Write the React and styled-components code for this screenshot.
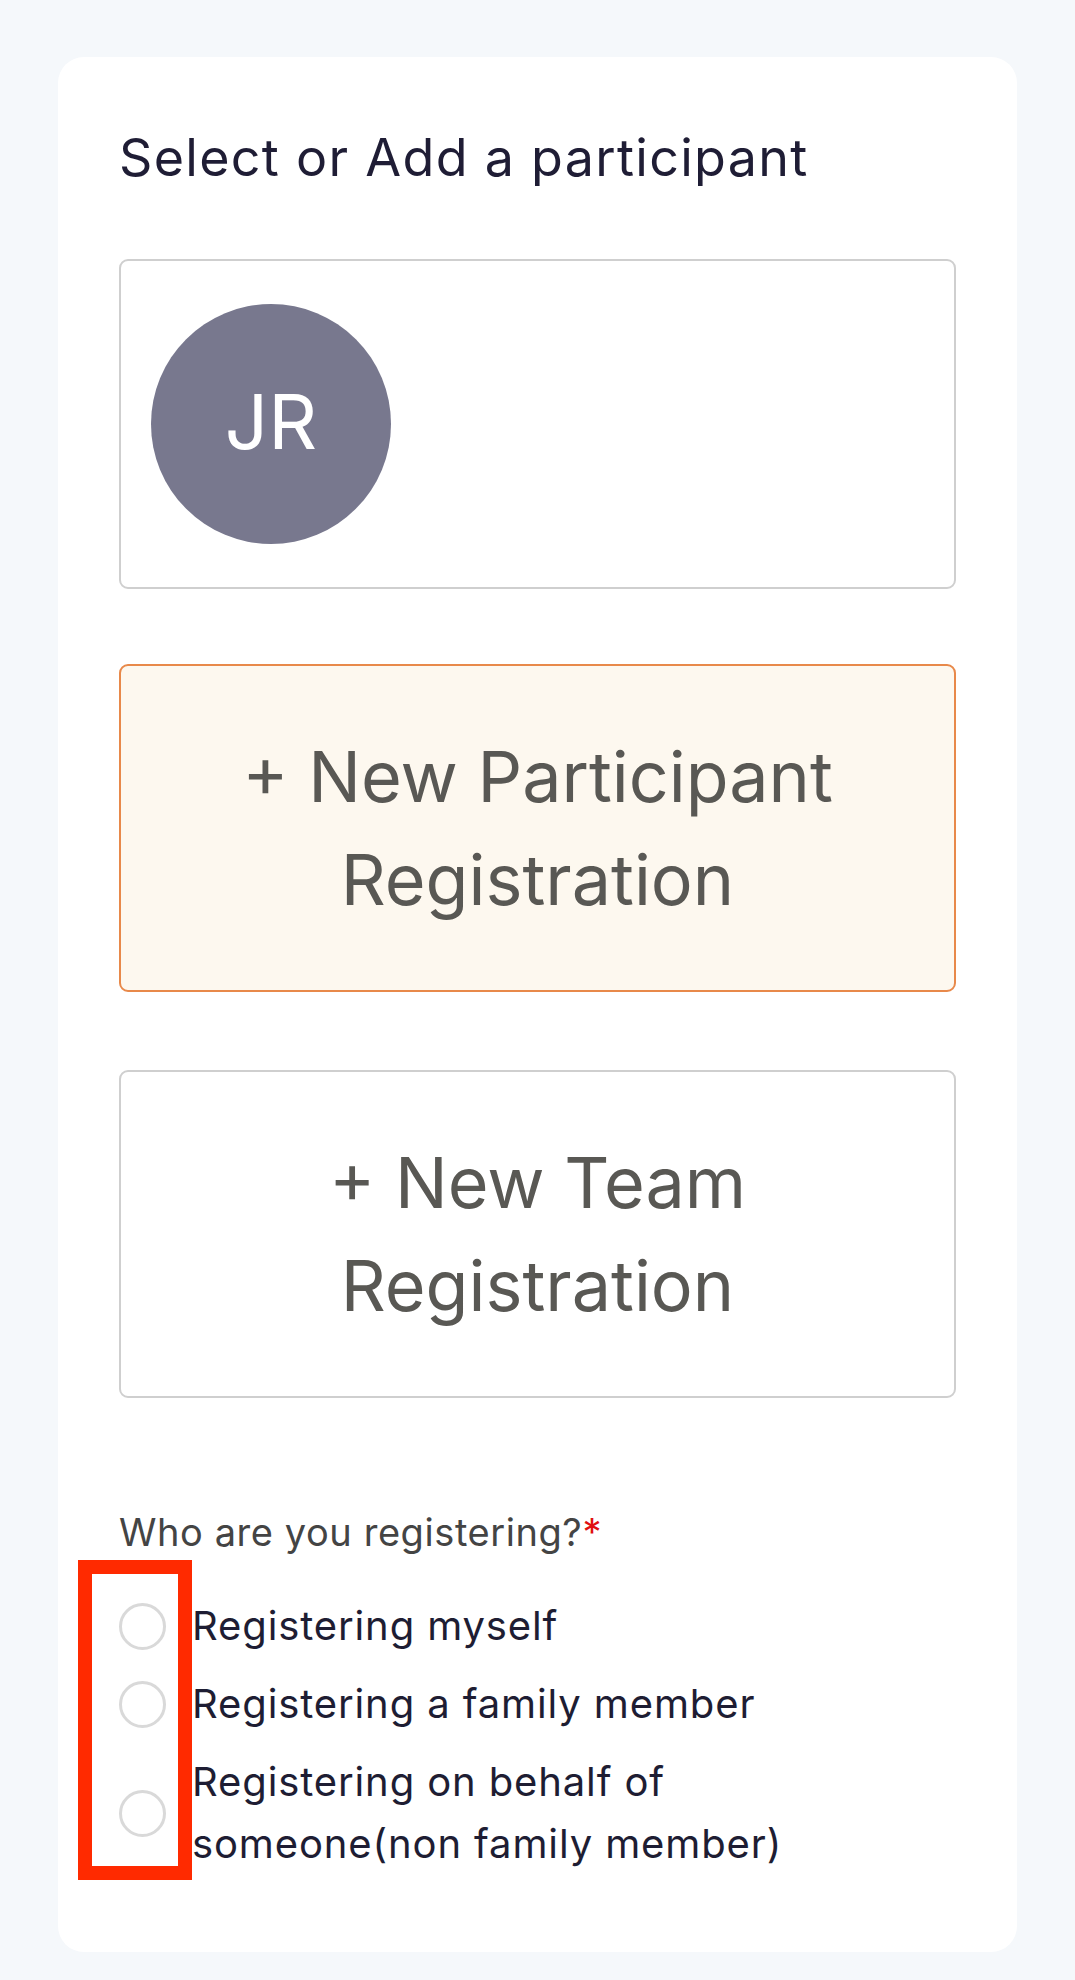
import React from "react";
import styled, { createGlobalStyle } from "styled-components";

const GlobalStyle = createGlobalStyle`
    body {
        margin: 0;
        background: #f5f8fb;
        font-family: Inter, "Noto Sans", sans-serif;
    }
`;

const Page = styled.div`
    padding: 57px 58px 30px;
`;

const Card = styled.div`
    position: relative;
    background: #ffffff;
    border-radius: 26px;
    padding: 69px 61px 77px;
`;

const Title = styled.h1`
    margin: 0 0 70px;
    font-size: 52px;
    line-height: 63px;
    font-weight: 400;
    letter-spacing: 0.025em;
    color: #1f1d35;
`;

const ParticipantBox = styled.div`
    display: flex;
    align-items: center;
    height: 330px;
    box-sizing: border-box;
    padding: 0 30px;
    border: 2px solid #cfcfcf;
    border-radius: 9px;
`;

const Avatar = styled.div`
    width: 240px;
    height: 240px;
    box-sizing: border-box;
    padding-bottom: 6px;
    border-radius: 50%;
    background: #78788e;
    color: #ffffff;
    display: flex;
    align-items: center;
    justify-content: center;
    font-size: 76px;
    line-height: 1;
`;

const OptionBox = styled.button`
    display: flex;
    align-items: center;
    justify-content: center;
    width: 100%;
    height: 328px;
    margin-top: ${props => props.gap}px;
    padding: 0 80px;
    box-sizing: border-box;
    border: 2px solid ${props => props.active ? '#e8894a' : '#cfcfcf'};
    background: ${props => props.active ? '#fdf8ef' : '#ffffff'};
    border-radius: 9px;
    font-family: inherit;
    font-size: 70px;
    line-height: 103px;
    color: #595854;
    text-align: center;
`;

const Question = styled.div`
    margin-top: 104px;
    font-size: 38px;
    line-height: 60px;
    letter-spacing: 0.015em;
    color: #444444;
`;

const Required = styled.span`
    color: #e01010;
`;

const RadioList = styled.div`
    display: flex;
    flex-direction: column;
    gap: 16px;
    margin-top: 33px;
`;

const RadioRow = styled.label`
    display: flex;
    align-items: center;
    gap: 26px;
    max-width: 760px;
    font-size: 40px;
    line-height: 62px;
    letter-spacing: 0.022em;
    color: #1e1d33;
`;

const RadioCircle = styled.span`
    flex: none;
    width: 47px;
    height: 47px;
    box-sizing: border-box;
    border: 3px solid #d9d9d9;
    border-radius: 50%;
    background: #ffffff;
`;

const Highlight = styled.div`
    position: absolute;
    left: 20px;
    top: 1503px;
    width: 114px;
    height: 320px;
    box-sizing: border-box;
    border: 14px solid #ff2a00;
    pointer-events: none;
`;

const options = [
    "Registering myself",
    "Registering a family member",
    "Registering on behalf of someone(non family member)"
];

export default function App() {
    return (
        <Page>
            <GlobalStyle/>
            <Card>
                <Title>Select or Add a participant</Title>

                <ParticipantBox>
                    <Avatar>JR</Avatar>
                </ParticipantBox>

                <OptionBox active gap={75}>+ New Participant Registration</OptionBox>
                <OptionBox gap={78}>+ New Team Registration</OptionBox>

                <Question>Who are you registering?<Required>*</Required></Question>

                <RadioList>
                    {options.map(text => (
                        <RadioRow key={text}>
                            <RadioCircle/>
                            <span>{text}</span>
                        </RadioRow>
                    ))}
                </RadioList>

                <Highlight/>
            </Card>
        </Page>
    );
}
